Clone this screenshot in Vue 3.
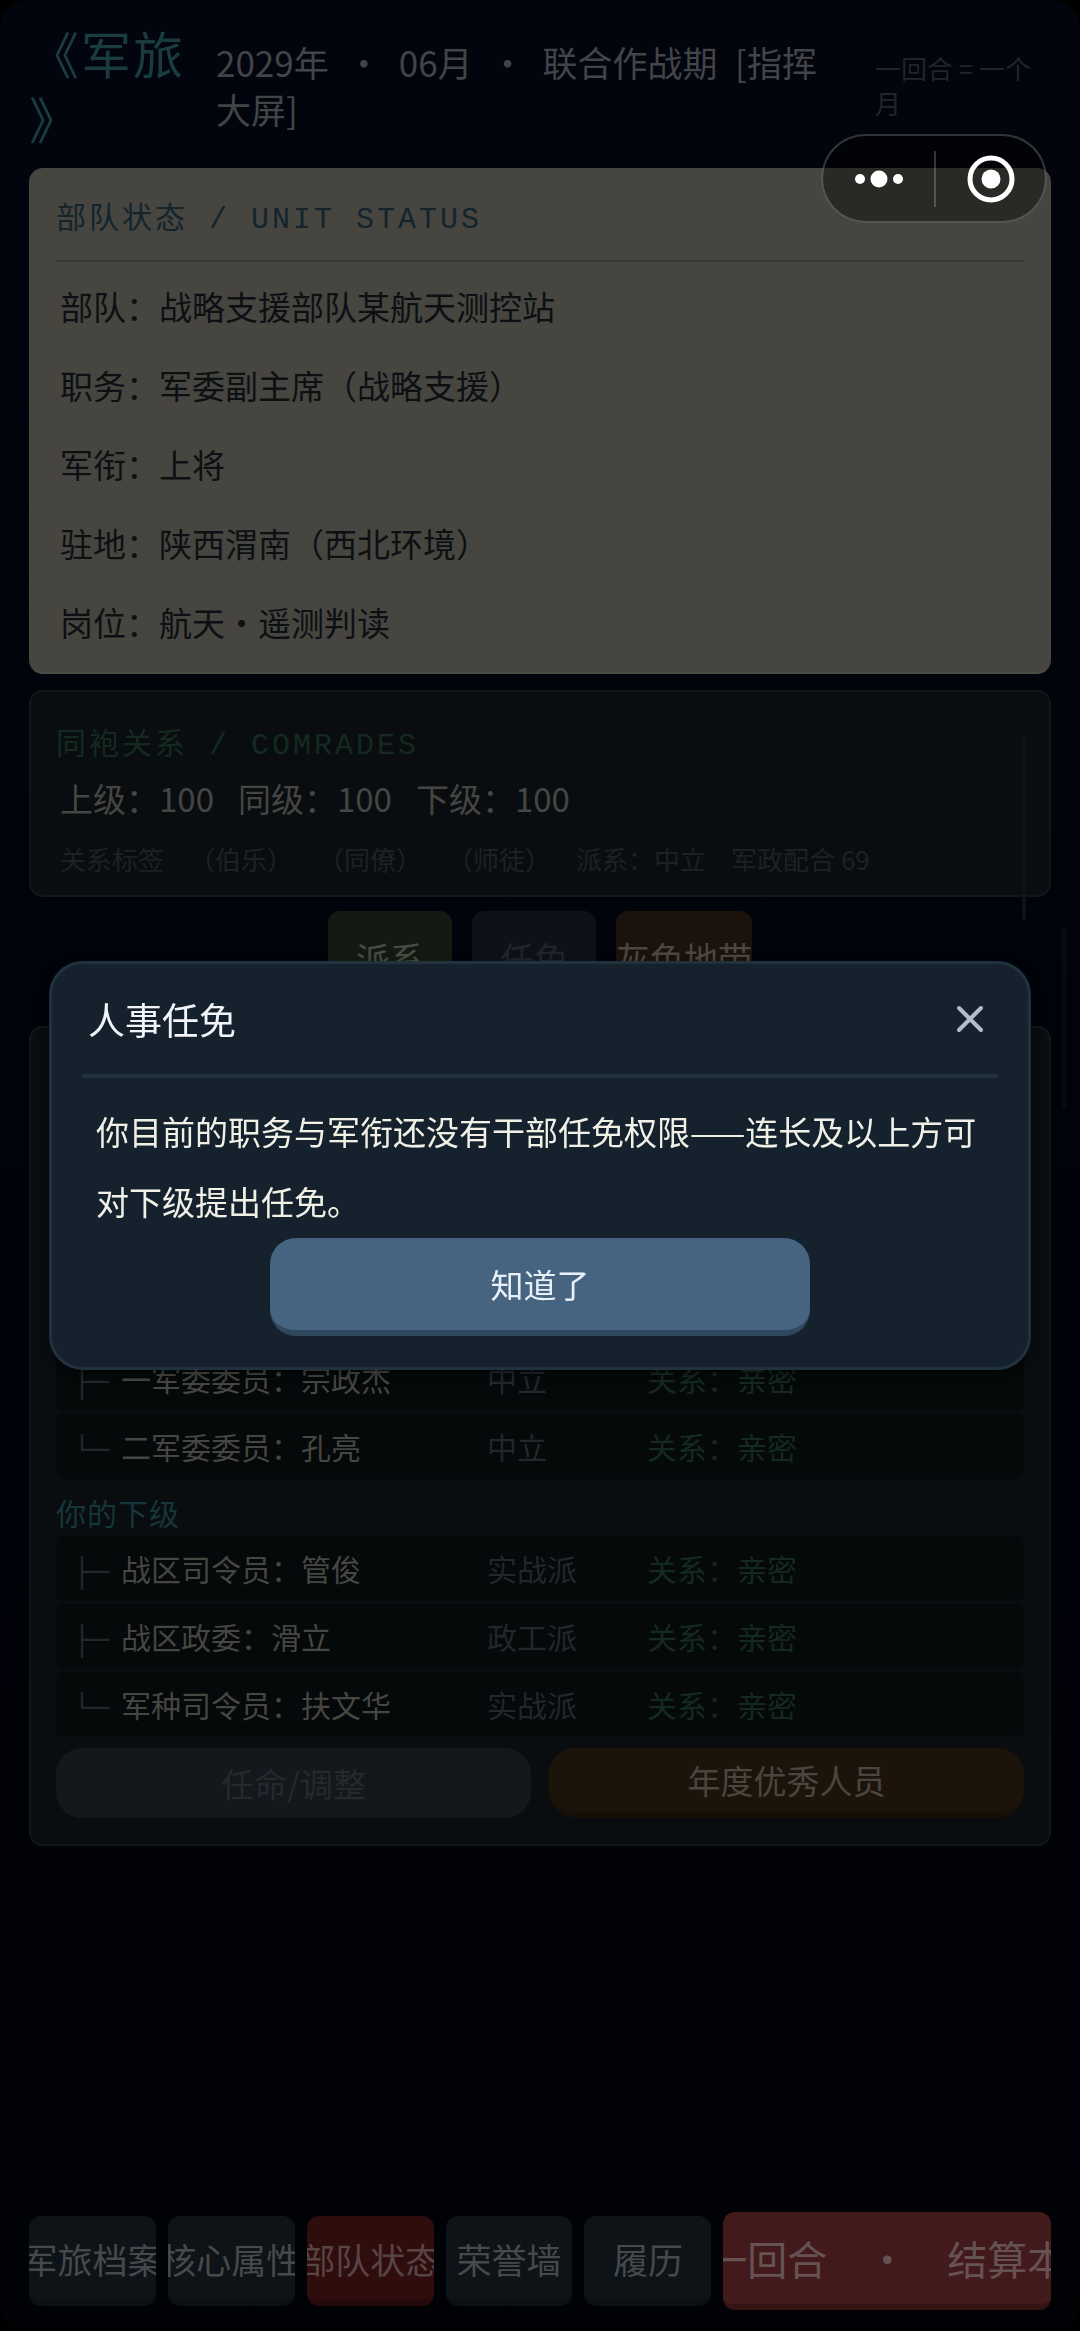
<script setup>
import { ref } from "vue";

const dialogOpen = ref(true);
const activeTab = ref("unit");

const unitRows = [
  { label: "部队", value: "战略支援部队某航天测控站" },
  { label: "职务", value: "军委副主席（战略支援）" },
  { label: "军衔", value: "上将" },
  { label: "驻地", value: "陕西渭南（西北环境）" },
  { label: "岗位", value: "航天·遥测判读" },
];

const relations = ["上级：100", "同级：100", "下级：100"];
const relationTags = ["关系标签", "（伯乐）", "（同僚）", "（师徒）", "派系：中立", "军政配合 69"];

const peers = [
  { branch: "├─", name: "一军委委员：宗政杰", faction: "中立", bond: "关系：亲密" },
  { branch: "└─", name: "二军委委员：孔亮", faction: "中立", bond: "关系：亲密" },
];

const subordinates = [
  { branch: "├─", name: "战区司令员：管俊", faction: "实战派", bond: "关系：亲密" },
  { branch: "├─", name: "战区政委：滑立", faction: "政工派", bond: "关系：亲密" },
  { branch: "└─", name: "军种司令员：扶文华", faction: "实战派", bond: "关系：亲密" },
];

const tabs = [
  { id: "archive", label: "军旅档案" },
  { id: "attrs", label: "核心属性" },
  { id: "unit", label: "部队状态" },
  { id: "honor", label: "荣誉墙" },
  { id: "resume", label: "履历" },
];
</script>

<template>
  <div class="screen">
    <header class="topbar">
      <h1 class="game-title">《军旅》</h1>
      <p class="game-date">2029年&ensp;·&ensp;06月&ensp;·&ensp;联合作战期&ensp;[指挥大屏]</p>
      <p class="turn-hint">一回合 = 一个月</p>
    </header>

    <main class="content">
      <section class="card card--paper">
        <h2 class="card-title card-title--ruled">部队状态 / UNIT STATUS</h2>
        <p v-for="row in unitRows" :key="row.label" class="unit-row">{{ row.label }}：{{ row.value }}</p>
      </section>

      <section class="card card--comrades">
        <h2 class="card-title card-title--green">同袍关系 / COMRADES</h2>
        <div class="relation-row">
          <span v-for="item in relations" :key="item">{{ item }}</span>
        </div>
        <div class="tag-row">
          <span v-for="tag in relationTags" :key="tag">{{ tag }}</span>
        </div>
      </section>

      <div class="quick-actions">
        <button type="button" class="quick quick--faction">派系</button>
        <button type="button" class="quick quick--appoint">任免</button>
        <button type="button" class="quick quick--grey">灰色地带</button>
      </div>

      <section class="card card--tree">
        <ul class="tree">
          <li v-for="person in peers" :key="person.name" class="tree-row">
            <span class="branch">{{ person.branch }}</span>
            <span class="name">{{ person.name }}</span>
            <span class="faction">{{ person.faction }}</span>
            <span class="bond">{{ person.bond }}</span>
          </li>
        </ul>
        <h3 class="tree-title">你的下级</h3>
        <ul class="tree">
          <li v-for="person in subordinates" :key="person.name" class="tree-row">
            <span class="branch">{{ person.branch }}</span>
            <span class="name">{{ person.name }}</span>
            <span class="faction">{{ person.faction }}</span>
            <span class="bond">{{ person.bond }}</span>
          </li>
        </ul>
        <div class="tree-actions">
          <button type="button" class="pill pill--muted">任命/调整</button>
          <button type="button" class="pill pill--amber">年度优秀人员</button>
        </div>
      </section>
    </main>

    <nav class="tabbar">
      <button
        v-for="tab in tabs"
        :key="tab.id"
        type="button"
        class="tab"
        :class="{ 'tab--active': tab.id === activeTab }"
        @click="activeTab = tab.id"
      >
        <span>{{ tab.label }}</span>
      </button>
      <button type="button" class="tab tab--next">
        <span>一回合&ensp;&ensp;·&ensp;&ensp;结算本</span>
      </button>
    </nav>

    <i class="scroll-thumb scroll-thumb--inner"></i>
    <i class="scroll-thumb scroll-thumb--outer"></i>

    <div v-if="dialogOpen" class="dialog-layer">
      <div class="dialog" role="dialog" aria-labelledby="dialog-title">
        <div class="dialog-head">
          <h2 id="dialog-title" class="dialog-title">人事任免</h2>
          <button type="button" class="dialog-close" aria-label="关闭" @click="dialogOpen = false">
            <svg viewBox="0 0 28 28" width="28" height="28">
              <path d="M3 3 L25 25 M25 3 L3 25" />
            </svg>
          </button>
        </div>
        <p class="dialog-text">你目前的职务与军衔还没有干部任免权限——连长及以上方可对下级提出任免。</p>
        <button type="button" class="dialog-ok" @click="dialogOpen = false">知道了</button>
      </div>
    </div>

    <div class="capsule">
      <button type="button" class="capsule-btn" aria-label="更多">
        <svg viewBox="0 0 48 20" width="48" height="20">
          <circle cx="5" cy="10" r="5" />
          <circle cx="24" cy="10" r="8.5" />
          <circle cx="43" cy="10" r="5" />
        </svg>
      </button>
      <button type="button" class="capsule-btn" aria-label="退出">
        <svg viewBox="0 0 48 48" width="48" height="48">
          <circle class="ring" cx="24" cy="24" r="21" />
          <circle cx="24" cy="24" r="9.5" />
        </svg>
      </button>
    </div>
  </div>
</template>

<style>
body { background: #000; }
</style>

<style scoped>
.screen {
  position: relative;
  display: flex;
  flex-direction: column;
  min-height: 100vh;
  box-sizing: border-box;
  padding: 20px 29px 21px;
  border-radius: 28px;
  background: linear-gradient(#02050d, #01030b 50%, #010206);
  font-family: "Noto Sans CJK SC", sans-serif;
  font-weight: 400;
  text-spacing-trim: space-all;
  overflow: hidden;
}
h1, h2, h3, p, ul { margin: 0; padding: 0; font-weight: inherit; }
ul { list-style: none; }
button { padding: 0; border: 0; font: inherit; cursor: pointer; }

/* Header */
.topbar { display: grid; grid-template-columns: 160px 1fr 176px; align-items: center; margin-bottom: 18px; }
.game-title { font-size: 50px; line-height: 65px; letter-spacing: 2px; color: #1a3b3f; line-break: anywhere; }
.game-date { padding: 0 24px 0 27px; font-size: 35px; line-height: 47px; color: #424448; }
.turn-hint { font-size: 26px; line-height: 35px; color: #20242b; }

/* Cards */
.content { display: flex; flex-direction: column; }
.card { border: 2px solid #0f1719; border-radius: 14px; background: #090d10; padding: 30px 25px 16px; }
.card--paper { background: #464540; border-color: #464540; border-bottom-color: #4c4b47; padding-bottom: 10px; margin-bottom: 16px; }
.card--comrades { padding-top: 34px; margin-bottom: 14px; }
.card-title { font-family: "Liberation Mono", "Noto Sans CJK SC", monospace; font-size: 30px; line-height: 40px; letter-spacing: 3px; color: #13242d; }
.card-title--ruled { padding-bottom: 20px; border-bottom: 2px solid #3a3a35; margin-bottom: 5px; }
.card-title--green { color: #142a20; }
.unit-row { padding-left: 4px; font-size: 33px; line-height: 79px; color: #0c1013; }
.relation-row { display: flex; gap: 24px; margin-top: 7px; padding-left: 4px; font-size: 33px; line-height: 50px; color: #454542; }
.tag-row { display: flex; gap: 25px; margin-top: 16px; padding-left: 4px; font-size: 26px; line-height: 40px; color: #1d2124; white-space: nowrap; }

/* Quick actions */
.quick-actions { display: flex; justify-content: center; gap: 20px; margin-bottom: 16px; }
.quick { min-width: 124px; height: 99px; border-radius: 12px; font-size: 34px; border-bottom: 6px solid #0c110c; }
.quick--faction { background: #131a12; color: #494c45; }
.quick--appoint { background: #0d1119; color: #20242b; }
.quick--grey { background: #1c120c; color: #4d4640; }

/* Chain of command */
.card--tree { padding: 318px 25px 26px; }
.tree { display: grid; gap: 3px; }
.tree-row { display: grid; grid-template-columns: 48px 366px 160px 1fr; padding-left: 17px; border-radius: 8px; background: #050909; font-size: 30px; line-height: 65px; }
.branch { padding-top: 10px; font-family: "Liberation Mono", monospace; line-height: 55px; color: #22282a; }
.name { color: #464642; }
.faction { color: #22272c; }
.bond { color: #14291f; }
.tree-title { padding-top: 9px; font-size: 30px; line-height: 48px; letter-spacing: 1px; color: #15363a; }
.tree-actions { display: grid; grid-template-columns: 1fr 1fr; gap: 18px; margin-top: 11px; }
.pill { height: 70px; border-radius: 26px; font-size: 33px; line-height: 64px; }
.pill--muted { background: #14171c; color: #25292e; }
.pill--amber { background: #1c140b; color: #4a453e; border-bottom: 6px solid #160f08; }

/* Bottom tabs */
.tabbar { display: grid; grid-template-columns: repeat(5, minmax(0, 127fr)) minmax(0, 328fr); gap: 12px; align-items: center; margin-top: auto; }
.tab { display: flex; justify-content: center; align-items: center; height: 90px; overflow: hidden; white-space: nowrap; border-radius: 12px; border-bottom: 6px solid #0b0f12; background: #0e1317; color: #46494c; font-size: 35px; }
.tab--active { background: #300d0d; border-bottom-color: #250a0b; color: #574444; }
.tab--next { height: 98px; background: #431a1b; border-bottom-color: #341314; color: #665252; font-size: 40px; }
.tab span { flex: none; }

/* Scroll indicators float above the cards */
.scroll-thumb { position: absolute; width: 4px; height: 183px; border-radius: 2px; background: #0c1418; }
.scroll-thumb--inner { top: 737px; right: 54px; }
.scroll-thumb--outer { top: 925px; right: 14px; background: #060a12; }

/* Dialog */
.dialog-layer { position: fixed; inset: 0; display: grid; align-items: center; padding: 0 49px; }
.dialog { display: flex; flex-direction: column; border: 3px solid #21323f; border-radius: 34px; background: #15222e; padding: 26px 30px 31px; box-shadow: 0 4px 12px rgba(0, 0, 0, 0.4); }
.dialog-head { display: flex; justify-content: space-between; align-items: center; padding: 0 14px 26px 6px; border-bottom: 4px solid #213140; }
.dialog-title { font-size: 37px; line-height: 58px; color: #f1f4f8; }
.dialog-close { display: grid; background: none; }
.dialog-close path { fill: none; stroke: #b4bdcb; stroke-width: 4; stroke-linecap: round; }
.dialog-text { margin: 18px 0 2px; padding-left: 14px; font-size: 33px; line-height: 70px; color: #f1f0e6; }
.dialog-ok { align-self: center; width: 59%; height: 98px; border-radius: 26px; border-bottom: 6px solid #30485e; background: #46637f; color: #e9f1f8; font-size: 33px; }

/* Mini-program capsule */
.capsule { position: fixed; top: 134px; right: 33px; display: grid; grid-template-columns: 1fr 1fr; width: 226px; height: 89px; box-sizing: border-box; border: 2px solid rgba(255, 255, 255, 0.2); border-radius: 45px; background: rgba(0, 0, 0, 0.4); align-items: center; }
.capsule-btn { display: grid; place-items: center; height: 56px; background: none; }
.capsule-btn + .capsule-btn { border-left: 2px solid rgba(255, 255, 255, 0.2); }
.capsule-btn circle { fill: #fff; }
.capsule-btn .ring { fill: none; stroke: #fff; stroke-width: 5; }
</style>
